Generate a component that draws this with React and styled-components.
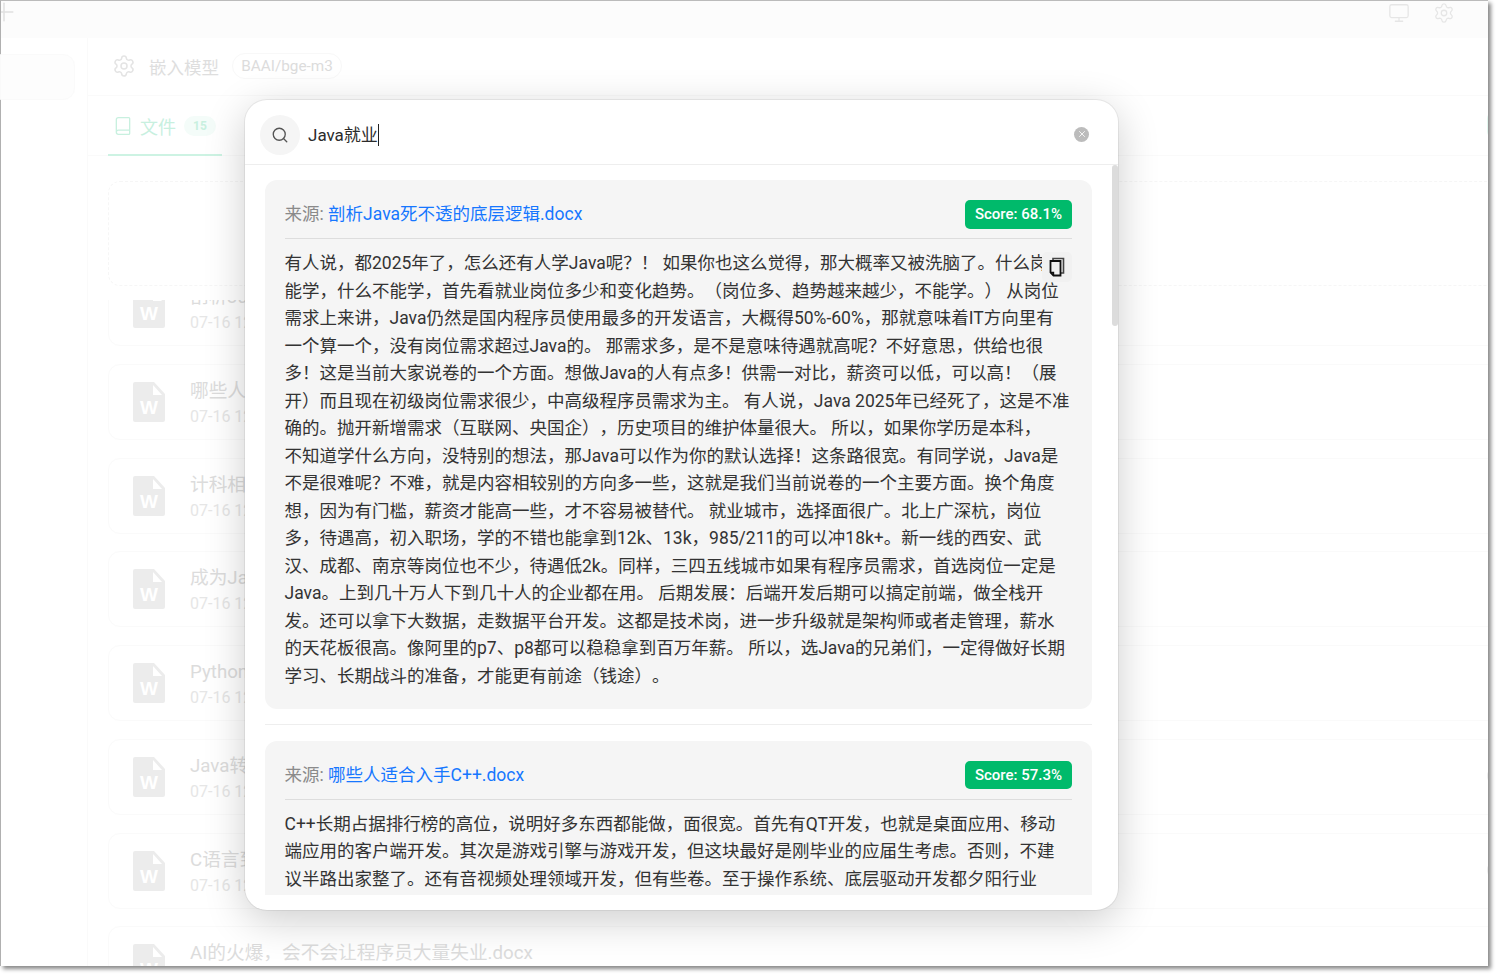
import React from "react";
import styled, { createGlobalStyle } from "styled-components";
import { Book, Monitor, Plus, Search, Settings, X } from "lucide-react";

const UI_FONT = `Roboto, "Noto Sans CJK SC", sans-serif`;

const Global = createGlobalStyle`
  html, body { margin: 0; padding: 0; background: #fff; overflow: hidden; }
  * { box-sizing: border-box; }
  body { text-spacing-trim: space-all; }
`;

const Page = styled.div`
  width: 1498px;
  height: 976px;
  background: #fff;
  font-family: ${UI_FONT};
  overflow: hidden;
`;
const Win = styled.div`
  position: relative;
  width: 1488px;
  height: 966px;
  background: #fff;
  border-top: 1px solid #bbb;
  border-left: 1px solid #b0b0b0;
  box-shadow: 3px 3px 4px #8a8a8a;
  display: flex;
  flex-direction: column;
`;
const TopBar = styled.header`
  height: 37px;
  flex: none;
  background: #fcfcfc;
  display: flex;
  align-items: flex-start;
  justify-content: space-between;
  color: #e2e2e2;
  overflow: hidden;
`;
const PlusMark = styled.span`
  display: flex;
  margin: -4px 0 0 -12px;
  color: #e0e0e0;
`;
const TopTools = styled.div`
  display: flex;
  gap: 23px;
  margin: 1px 33px 0 0;
  color: #e6e6e6;
`;
const Body = styled.div`
  flex: 1;
  min-height: 0;
  display: flex;
`;
const Sidebar = styled.aside`
  width: 87px;
  flex: none;
  border-right: 1px solid #fafafa;
  padding-top: 16px;
`;
const SideItem = styled.div`
  height: 46px;
  width: 75px;
  margin-left: -1px;
  background: #fdfdfd;
  border: 1px solid #fafafa;
  border-radius: 0 12px 12px 0;
`;
const Main = styled.main`
  flex: 1;
  min-width: 0;
  display: flex;
  flex-direction: column;
  overflow: hidden;
`;
const ModelBar = styled.div`
  height: 58px;
  flex: none;
  border-bottom: 1px solid #fafafa;
  display: flex;
  align-items: center;
  padding: 0 0 1px 24px;
  color: #e4e4e4;
`;
const ModelLabel = styled.span`
  margin-left: 13px;
  font-size: 17.5px;
  color: #dedede;
`;
const Pill = styled.span`
  margin-left: 13px;
  height: 26px;
  width: 110px;
  border: 1px solid #f8f8f8;
  border-radius: 13px;
  display: flex;
  align-items: center;
  justify-content: center;
  font-size: 15.3px;
  color: #dcdcdc;
`;
const TabBar = styled.div`
  height: 60px;
  flex: none;
  border-bottom: 1px solid #fafafa;
  padding-left: 20px;
  display: flex;
  justify-content: space-between;
  align-items: flex-end;
`;
const Tab = styled.div`
  width: 114px;
  height: 60px;
  margin-bottom: -1px;
  border-bottom: 2px solid #cdf3e3;
  display: flex;
  align-items: center;
  padding: 1px 0 0 5px;
  color: #c8f0df;
`;
const TabText = styled.span`
  margin-left: 7px;
  font-size: 18px;
`;
const TabBadge = styled.span`
  margin-left: 8px;
  width: 32px;
  height: 20px;
  border-radius: 10px;
  background: #f4fcf9;
  font-size: 12px;
  font-weight: 700;
  display: flex;
  align-items: center;
  justify-content: center;
`;
const TabAction = styled.span`
  width: 20px;
  height: 28px;
  margin: 0 -19px 16px 0;
  border-radius: 8px;
  background: #e3f7ef;
`;
const Content = styled.div`
  flex: 1;
  min-height: 0;
  padding: 25px 0 0 20px;
  display: flex;
  flex-direction: column;
  gap: 14px;
  overflow: hidden;
`;
const Upload = styled.div`
  height: 105px;
  flex: none;
  width: 1420px;
  border: 1px dashed #f6f6f6;
  border-radius: 12px;
`;
const FileClip = styled.div`
  flex: 1;
  min-height: 0;
  overflow: hidden;
`;
const FileList = styled.div`
  margin-top: -30px;
  display: flex;
  flex-direction: column;
  gap: 17.75px;
`;
const FileCard = styled.div`
  width: 1420px;
  height: 76px;
  flex: none;
  border: 1px solid #fafafa;
  border-radius: 12px;
  padding: 17px 0 0 24px;
  display: flex;
  gap: 25px;
  position: relative;
`;
const DocSvg = styled.svg`
  width: 32px;
  height: 40px;
  flex: none;
`;
const DocW = styled.text`
  font-family: "Liberation Sans", sans-serif;
  font-weight: 700;
  font-size: 19px;
  fill: #fff;
`;
const FileMeta = styled.div`
  display: flex;
  flex-direction: column;
  gap: 1px;
  margin-top: -4px;
`;
const FileName = styled.div`
  font-size: 18.7px;
  line-height: 26px;
  color: #dcdcdc;
  white-space: nowrap;
`;
const FileDate = styled.div`
  font-size: 16px;
  line-height: 24px;
  color: #e6e6e6;
`;
const RowDot = styled.span`
  position: absolute;
  top: 26px;
  left: 1378px;
  width: 20px;
  height: 20px;
  border-radius: 50%;
  background: #eee;
`;

const Modal = styled.section`
  position: absolute;
  left: 244px;
  top: 99px;
  width: 873px;
  height: 810px;
  background: #fff;
  border-radius: 22px;
  box-shadow: 0 0 0 1px rgba(0, 0, 0, 0.06), 0 10px 42px rgba(0, 0, 0, 0.2);
  display: flex;
  flex-direction: column;
  overflow: hidden;
`;
const SearchRow = styled.div`
  height: 65px;
  flex: none;
  border-bottom: 1px solid #eee;
  padding: 5px 29px 0 15px;
  display: flex;
  align-items: center;
`;
const SearchCircle = styled.span`
  width: 40px;
  height: 40px;
  flex: none;
  border-radius: 50%;
  background: #f5f5f5;
  color: #555;
  display: flex;
  align-items: center;
  justify-content: center;
`;
const Query = styled.div`
  flex: 1;
  margin-left: 8px;
  display: flex;
  align-items: center;
  font-size: 17px;
  color: #2b2b2b;
`;
const QueryText = styled.span`
  line-height: 22px;
  border-right: 1px solid #222;
  height: 22px;
  white-space: nowrap;
`;
const Clear = styled.span`
  width: 15px;
  height: 15px;
  margin-top: -1px;
  border-radius: 50%;
  background: #bcbcbc;
  color: #fff;
  display: flex;
  align-items: center;
  justify-content: center;
`;
const Results = styled.div`
  flex: 1;
  min-height: 0;
  margin-bottom: 15px;
  padding: 15px 26px 0 20px;
  overflow: hidden;
`;
const ScrollThumb = styled.span`
  position: absolute;
  left: 867px;
  top: 65px;
  width: 6px;
  height: 161px;
  border-radius: 3px;
  background: #dcdcdc;
`;
const Card = styled.article`
  position: relative;
  background: #f5f5f5;
  border-radius: 12px;
  padding: 20px 20px 18.5px 19.5px;
`;
const CardHead = styled.div`
  display: flex;
  justify-content: space-between;
  align-items: center;
  padding-bottom: 9.5px;
  border-bottom: 1px solid #ddd;
  margin-bottom: 11px;
`;
const Source = styled.div`
  font-size: 17.5px;
  line-height: 26px;
  color: #8a8a8a;
  white-space: nowrap;
`;
const SourceLink = styled.a`
  color: #1677ff;
  text-decoration: none;
`;
const Score = styled.span`
  width: 107px;
  height: 28.5px;
  border-radius: 5px;
  background: #00ba6b;
  color: #fff;
  font-size: 15px;
  font-weight: 500;
  display: flex;
  align-items: center;
  justify-content: center;
`;
const Text = styled.div`
  font-size: 17.5px;
  line-height: 27.53px;
  color: #333;
`;
const Line = styled.span`
  display: block;
  white-space: nowrap;
`;
const CopyBtn = styled.button`
  position: absolute;
  top: 72px;
  right: 20px;
  width: 30px;
  height: 30px;
  padding: 0;
  border: 0;
  border-radius: 5px;
  background: #f1f1f1;
  display: flex;
  align-items: center;
  justify-content: center;
`;
const Sep = styled.hr`
  margin: 15px 0 15.5px;
  border: 0;
  border-top: 1px solid #eee;
`;

const files = [
  "剖析Java死不透的底层逻辑.docx",
  "哪些人适合入手C++.docx",
  "计科相关专业如何选择.docx",
  "成为Java工程师.docx",
  "Python就业方向.docx",
  "Java转行指南.docx",
  "C语言到底学什么.docx",
  "AI的火爆，会不会让程序员大量失业.docx",
];

const results = [
  {
    name: "剖析Java死不透的底层逻辑.docx",
    score: "68.1",
    copy: true,
    lines: [
      "有人说，都2025年了，怎么还有人学Java呢？！ 如果你也这么觉得，那大概率又被洗脑了。什么岗",
      "能学，什么不能学，首先看就业岗位多少和变化趋势。（岗位多、趋势越来越少，不能学。） 从岗位",
      "需求上来讲，Java仍然是国内程序员使用最多的开发语言，大概得50%-60%，那就意味着IT方向里有",
      "一个算一个，没有岗位需求超过Java的。 那需求多，是不是意味待遇就高呢？不好意思，供给也很",
      "多！这是当前大家说卷的一个方面。想做Java的人有点多！供需一对比，薪资可以低，可以高！（展",
      "开）而且现在初级岗位需求很少，中高级程序员需求为主。 有人说，Java 2025年已经死了，这是不准",
      "确的。抛开新增需求（互联网、央国企），历史项目的维护体量很大。 所以，如果你学历是本科，",
      "不知道学什么方向，没特别的想法，那Java可以作为你的默认选择！这条路很宽。有同学说，Java是",
      "不是很难呢？不难，就是内容相较别的方向多一些，这就是我们当前说卷的一个主要方面。换个角度",
      "想，因为有门槛，薪资才能高一些，才不容易被替代。 就业城市，选择面很广。北上广深杭，岗位",
      "多，待遇高，初入职场，学的不错也能拿到12k、13k，985/211的可以冲18k+。新一线的西安、武",
      "汉、成都、南京等岗位也不少，待遇低2k。同样，三四五线城市如果有程序员需求，首选岗位一定是",
      "Java。上到几十万人下到几十人的企业都在用。 后期发展：后端开发后期可以搞定前端，做全栈开",
      "发。还可以拿下大数据，走数据平台开发。这都是技术岗，进一步升级就是架构师或者走管理，薪水",
      "的天花板很高。像阿里的p7、p8都可以稳稳拿到百万年薪。 所以，选Java的兄弟们，一定得做好长期",
      "学习、长期战斗的准备，才能更有前途（钱途）。",
    ],
  },
  {
    name: "哪些人适合入手C++.docx",
    score: "57.3",
    lines: [
      "C++长期占据排行榜的高位，说明好多东西都能做，面很宽。首先有QT开发，也就是桌面应用、移动",
      "端应用的客户端开发。其次是游戏引擎与游戏开发，但这块最好是刚毕业的应届生考虑。否则，不建",
      "议半路出家整了。还有音视频处理领域开发，但有些卷。至于操作系统、底层驱动开发都夕阳行业",
      "了，不建议投入太多精力。",
    ],
  },
];

const DocIcon = () => (
  <DocSvg viewBox="0 0 32 40">
    <path d="M2 0H21L32 12V38a2 2 0 0 1-2 2H2a2 2 0 0 1-2-2V2a2 2 0 0 1 2-2Z" fill="#ececec" />
    <path d="M20 3L29 13H20Z" fill="#fff" />
    <DocW x="16" y="32" textAnchor="middle">W</DocW>
  </DocSvg>
);

const CopyIcon = () => (
  <svg width="16" height="20" viewBox="0 0 16 20" fill="none">
    <path d="M4 3V1.5H14.5V16H12" stroke="#444" strokeWidth="1.6" />
    <path d="M1.5 4H11.5V18.5H4.5L1.5 15.5Z" stroke="#111" strokeWidth="1.8" />
    <path d="M1.5 15.5H4.5V18.5" stroke="#111" strokeWidth="1.4" />
  </svg>
);

export default function App() {
  return (
    <Page>
      <Global />
      <Win>
        <TopBar>
          <PlusMark><Plus size={30} strokeWidth={1.2} /></PlusMark>
          <TopTools>
            <Monitor size={22} strokeWidth={1.4} />
            <Settings size={22} strokeWidth={1.4} />
          </TopTools>
        </TopBar>
        <Body>
          <Sidebar><SideItem /></Sidebar>
          <Main>
            <ModelBar>
              <Settings size={24} strokeWidth={1.5} />
              <ModelLabel>嵌入模型</ModelLabel>
              <Pill>BAAI/bge-m3</Pill>
            </ModelBar>
            <TabBar>
              <Tab>
                <Book size={20} strokeWidth={1.6} />
                <TabText>文件</TabText>
                <TabBadge>15</TabBadge>
              </Tab>
              <TabAction />
            </TabBar>
            <Content>
              <Upload />
              <FileClip>
                <FileList>
                  {files.map((name, i) => (
                    <FileCard key={name}>
                      <DocIcon />
                      <FileMeta>
                        <FileName>{name}</FileName>
                        <FileDate>07-16 12:30</FileDate>
                      </FileMeta>
                      {(i === 5 || i === 6) && <RowDot />}
                    </FileCard>
                  ))}
                </FileList>
              </FileClip>
            </Content>
          </Main>
        </Body>

        <Modal>
          <SearchRow>
            <SearchCircle><Search size={18} strokeWidth={1.8} /></SearchCircle>
            <Query><QueryText>Java就业</QueryText></Query>
            <Clear><X size={10} strokeWidth={2} /></Clear>
          </SearchRow>
          <Results>
            {results.map((r, i) => (
              <React.Fragment key={r.name}>
                {i > 0 && <Sep />}
                <Card>
                  <CardHead>
                    <Source>来源: <SourceLink>{r.name}</SourceLink></Source>
                    <Score>Score: {r.score}%</Score>
                  </CardHead>
                  <Text>
                    {r.lines.map((l) => <Line key={l}>{l}</Line>)}
                  </Text>
                  {r.copy && <CopyBtn><CopyIcon /></CopyBtn>}
                </Card>
              </React.Fragment>
            ))}
          </Results>
          <ScrollThumb />
        </Modal>
      </Win>
    </Page>
  );
}
